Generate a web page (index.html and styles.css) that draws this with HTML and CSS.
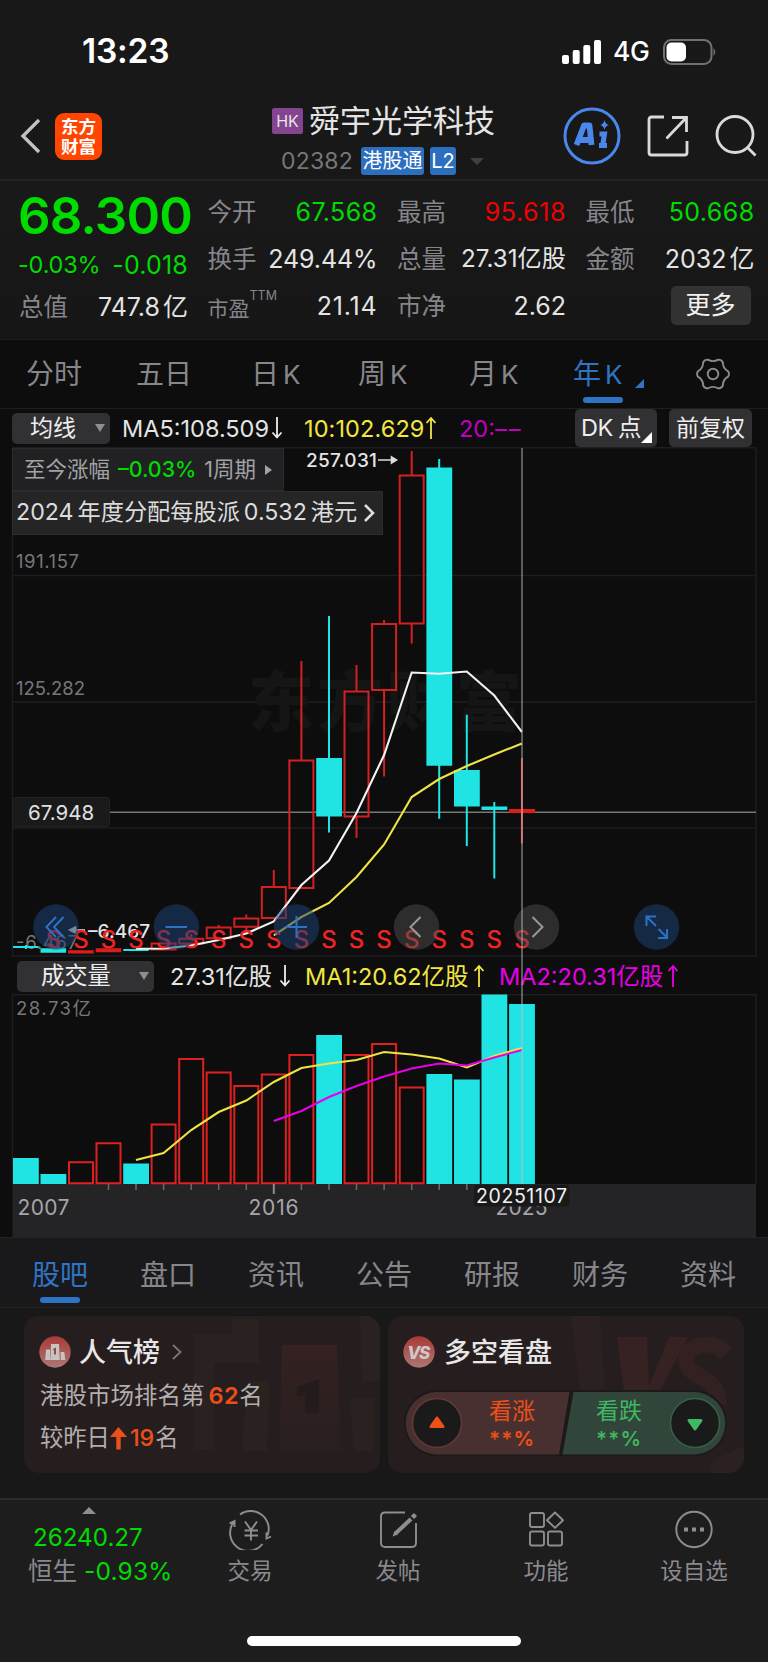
FILE: index.html
```html
<!DOCTYPE html>
<html lang="zh-CN">
<head>
<meta charset="utf-8">
<title>舜宇光学科技 02382</title>
<link rel="stylesheet" href="styles.css">
</head>
<body>
<div class="phone">
  <div class="status">
    <span class="clock">13:23</span>
    <svg class="signal" width="40" height="26" viewBox="0 0 40 26" fill="#fff"><rect x="0" y="16" width="7" height="9" rx="2"/><rect x="10.700" y="11" width="7" height="14" rx="2"/><rect x="21.300" y="6" width="7" height="19" rx="2"/><rect x="32" y="1" width="7" height="24" rx="2"/></svg>
    <span class="net">4G</span>
    <svg class="battery" width="54" height="28" viewBox="0 0 54 28"><rect x="1" y="2" width="47.500" height="24" rx="7.500" fill="none" stroke="#717171" stroke-width="2"/><rect x="3.500" y="4.500" width="19.500" height="19" rx="5" fill="#fff"/><path d="M50.500 10q3.500 4 0 8z" fill="#717171"/></svg>
  </div>

  <header class="header">
    <svg class="back" width="22" height="36" viewBox="0 0 22 36"><path d="M19 2L3 18l16 16" fill="none" stroke="#c2c2c2" stroke-width="3.400"/></svg>
    <div class="logo"><span>东方</span><span>财富</span></div>
    <div class="title">
      <div class="name-row"><span class="hk">HK</span><span class="name">舜宇光学科技</span></div>
      <div class="code-row"><span class="code">02382</span><span class="tag">港股通</span><span class="tag l2">L2</span><i class="drop"></i></div>
    </div>
    <svg class="ai" width="58" height="58" viewBox="0 0 58 58"><circle cx="29" cy="29" r="27" fill="none" stroke="#4a86ec" stroke-width="3"/><path d="M13.500 38L21 18.500h5.500L28.500 38M17 33h11" fill="none" stroke="#4a86ec" stroke-width="5.800" stroke-linejoin="round"/><path d="M36.500 27h5L39.500 39.500M36 38.500h8" fill="none" stroke="#4a86ec" stroke-width="5"/><path d="M41.500 13q.8 4.200 4.500 5-3.700.8-4.500 5-.8-4.200-4.500-5 3.700-.8 4.500-5z" fill="#4a86ec"/></svg>
    <svg class="share" width="42" height="42" viewBox="0 0 42 42" fill="none" stroke="#dadada" stroke-width="2.800"><path d="M17 2H4.500Q2 2 2 4.500v33Q2 40 4.500 40h33q2.500 0 2.500-2.500V26"/><path d="M25 2.500h14.500V17M39 3L19.500 23.500"/></svg>
    <svg class="search" width="42" height="42" viewBox="0 0 42 42" fill="none" stroke="#dadada" stroke-width="2.800"><circle cx="20" cy="19.500" r="18"/><path d="M32.500 32.500l8 8"/></svg>
  </header>

  <section class="quote">
    <div class="main">
      <div class="price">68.300</div>
      <div class="chg"><span>-0.03%</span><span class="chg2">-0.018</span></div>
      <div class="cell"><label>总值</label><b>747.8<em>亿</em></b></div>
    </div>
    <div class="col">
      <div class="cell"><label>今开</label><b class="up">67.568</b></div>
      <div class="cell"><label>换手</label><b class="w">249.44%</b></div>
      <div class="cell"><label class="pe">市盈<sup>TTM</sup></label><b class="n">21.14</b></div>
    </div>
    <div class="col">
      <div class="cell"><label>最高</label><b class="red">95.618</b></div>
      <div class="cell"><label>总量</label><b class="s">27.31亿股</b></div>
      <div class="cell"><label>市净</label><b>2.62</b></div>
    </div>
    <div class="col">
      <div class="cell"><label>最低</label><b class="up">50.668</b></div>
      <div class="cell"><label>金额</label><b>2032<em>亿</em></b></div>
      <div class="cell"><span class="more">更多</span></div>
    </div>
  </section>

  <nav class="periods">
    <span class="p1">分时</span><span class="p2">五日</span><span class="p3">日<u>K</u></span><span class="p3">周<u>K</u></span><span class="p3">月<u>K</u></span><span class="p3 on">年<u>K</u><i class="corner"></i></span>
    <span class="p4"><svg width="34" height="34" viewBox="-17 -17 34 34" fill="none" stroke="#8a8a8e" stroke-width="1.900"><circle r="5.300"/><path stroke-linejoin="round" d="M15.100-2.700Q16.800 0 15.100 2.700Q9.800 5.700 9.800 11.800Q8.400 14.500 5.200 14.400Q0 11.300-5.200 14.400Q-8.400 14.500-9.800 11.800Q-9.800 5.700-15.100 2.700Q-16.800 0-15.100-2.700Q-9.800-5.700-9.800-11.800Q-8.400-14.500-5.200-14.400Q0-11.300 5.200-14.400Q8.400-14.500 9.800-11.800Q9.800-5.700 15.100-2.700z"/></svg></span>
  </nav>

  <section class="chart">
    <div class="ma-row">
      <span class="btn sel">均线<i></i></span>
      <span class="ma ma5">MA5:108.509</span><svg class="arr" width="12" height="24" viewBox="0 0 12 24" stroke="#eee"><path d="M6 1v20M1.500 16.500L6 21.500l4.500-5"/></svg>
      <span class="ma ma10">10:102.629</span><svg class="arr" width="12" height="24" viewBox="0 0 12 24" stroke="#f2e640"><path d="M6 23V2M1.500 7L6 2l4.500 5"/></svg>
      <span class="ma ma20">20:<em>––</em></span>
      <span class="btn dk">DK<s></s>点<i></i></span>
      <span class="btn fq">前复权</span>
    </div>

    <div class="kline">
      <svg width="768" height="510" viewBox="0 447 768 510">
        <g fill="none" stroke="#1e1e20" stroke-width="1.500"><path d="M12.500 447.700H756V956H12.500zM12.500 575.500H756M12.500 702H756M12.500 828H756"/></g>
        <text class="mark" x="248" y="726" textLength="274">东方财富</text>
        <g class="axis"><text x="16" y="568" textLength="63">191.157</text><text x="16" y="695" textLength="69">125.282</text><text x="16" y="949" textLength="62">-6.467</text></g>
        <path d="M110 812.300H756" stroke="#777" stroke-width="1.500"/>
        <g fill="none" stroke="#d42020" stroke-width="2">
          <path d="M151.600 943.500h24v6h-24zM179.200 938.800h24v4.800h-24zM206.700 927.500h24v10.800h-24zM234.300 918.500h24v8.300h-24zM261.800 887h24v31h-24zM289.400 760.500h24V888h-24zM344.500 691.500h24v125h-24zM372.100 624h24v66h-24zM399.700 475.500h24v148h-24z"/>
          <path d="M191.200 934v4M191.200 944v3M218.700 925v2M246.300 914.500v4M246.300 927v7M273.800 870v17M301.400 661v99M356.500 665v26M356.500 817v21M384.100 620v4M384.100 690v86.500M411.700 451v24M411.700 624v19.500"/>
        </g>
        <path fill="#dd1c1c" d="M68.100 950.300h25.600v3.200H68.100zM95.700 948.200h25.600v4H95.700zM509.100 809h26v4h-26z"/>
        <path d="M521.900 758v85.500" stroke="#d8433f" stroke-width="2"/>
        <path fill="#20e4e4" d="M13 946h25.600v2H13zM24.900 945h2v4h-2zM40.500 948.300h25.600v4.400H40.500zM123.200 949h25.600v2h-25.600zM316.200 758h25.800v58.500h-25.800zM426.400 467.500h25.800v298.200h-25.800zM454 770h25.800v36.500H454zM481.500 806.500h25.800v3.500h-25.800z"/>
        <path d="M329 616v142M329 816v16.500M439.200 459v9M439.200 765v53.700M466.800 714.700v56M466.800 806v40M494.300 802v76.500" stroke="#20e4e4" stroke-width="2"/>
        <path class="line" stroke="#f3f3f3" d="M136 948.800L163.600 948.500L191.200 945.500L218.700 940L246.300 933.500L273.800 921.500L301.400 885L329 860.500L356.500 813L384.100 755L411.700 672.500L439.200 673.700L466.800 671.500L494.300 695.500L521.900 732"/>
        <path class="line" stroke="#efe445" d="M273.800 935.300L301.400 917L329 903L356.500 877L384.100 844.500L411.700 797L439.200 779L466.800 766L494.300 754.500L521.900 743.500"/>
        <g class="tip"><text x="306" y="467" textLength="71">257.031</text><text x="88" y="937.500" textLength="62">–6.467</text></g>
        <path d="M378 460h15M391.500 457l5 3-5 3zM72 930h13M75.500 927l-6 3 6 3z" stroke="#ddd" stroke-width="1.600" fill="#ddd"/>
      </svg>
      <div class="rise">至今涨幅 <b>–0.03%</b> <span>1周期</span><i></i></div>
      <div class="notice">2024<s></s>年度分配每股派<s></s>0.532<s></s>港元<svg width="12" height="20" viewBox="0 0 12 20"><path d="M2 2l8 8-8 8" fill="none" stroke="#ddd" stroke-width="2.600"/></svg></div>
      <div class="pricebox">67.948</div>
      <svg class="overlay" width="768" height="60" viewBox="0 897 768 60">
        <g class="sig"><text x="53.400" y="947.500">S</text><text x="80.900" y="947.500">S</text><text x="108.500" y="947.500">S</text><text x="136" y="947.500">S</text><text x="163.600" y="947.500">S</text><text x="191.200" y="947.500">S</text><text x="218.700" y="947.500">S</text><text x="246.300" y="947.500">S</text><text x="273.800" y="947.500">S</text><text x="301.400" y="947.500">S</text><text x="329" y="947.500">S</text><text x="356.500" y="947.500">S</text><text x="384.100" y="947.500">S</text><text x="411.700" y="947.500">S</text><text x="439.200" y="947.500">S</text><text x="466.800" y="947.500">S</text><text x="494.300" y="947.500">S</text><text x="521.900" y="947.500">S</text></g>
        <g fill="#1d4272" fill-opacity=".55"><circle cx="56" cy="927" r="22.700"/><circle cx="176.300" cy="927" r="22.700"/><circle cx="296.500" cy="927" r="22.700"/><circle cx="656.500" cy="927" r="22.700"/></g>
        <g fill="#4e4e50" fill-opacity=".5"><circle cx="416.500" cy="927" r="22.700"/><circle cx="536.500" cy="927" r="22.700"/></g>
        <g fill="none" stroke="#2c72c8" stroke-width="2"><path d="M56 917L46.500 927L56 937M63.500 917L54 927L63.500 937M165.500 927h21.500M285.500 927h21.500M296.500 916v22M656 926l-9.500-9.500M646.500 926v-9.500h9.500M658.500 929l8.500 8.500M658 938h9v-9"/></g>
        <g fill="none" stroke="#98989a" stroke-width="2"><path d="M420.500 917L410.500 927L420.500 937M532.500 917L542.500 927L532.500 937"/></g>
      </svg>
    </div>

    <div class="vol-row">
      <span class="btn sel2">成交量<i></i></span>
      <span class="ma v0">27.31亿股</span><svg class="arr" width="12" height="24" viewBox="0 0 12 24" stroke="#eee"><path d="M6 1v20M1.500 16.500L6 21.500l4.500-5"/></svg>
      <span class="ma v1">MA1:20.62亿股</span><svg class="arr" width="12" height="24" viewBox="0 0 12 24" stroke="#f2e640"><path d="M6 23V2M1.500 7L6 2l4.500 5"/></svg>
      <span class="ma v2">MA2:20.31亿股</span><svg class="arr" width="12" height="24" viewBox="0 0 12 24" stroke="#e800e8"><path d="M6 23V2M1.500 7L6 2l4.500 5"/></svg>
    </div>

    <svg class="volume" width="768" height="245" viewBox="0 994 768 245">
      <path d="M12.500 1184V994.700H756V1184" fill="none" stroke="#1e1e20" stroke-width="1.500"/>
      <path d="M12.500 1184H756v54H12.500z" fill="#242426"/>
      <text class="ax" x="16" y="1014.500" textLength="75">28.73亿</text>
      <path fill="#20e4e4" d="M13 1158h25.800v26H13zM40.500 1174h25.800v10H40.500zM123.200 1163.500h25.800v20.500h-25.800zM316.200 1035h25.800v149h-25.800zM426.400 1074h25.800v110h-25.800zM454 1079.500h25.800V1184H454zM481.500 994.500h25.800V1184h-25.800zM509.100 1004h25.800v180h-25.800z"/>
      <path fill="none" stroke="#df2020" stroke-width="2" d="M69 1162.300h24v21h-24zM96.500 1143.300h24v40h-24zM151.600 1124.500h24v58.800h-24zM179.200 1059h24v124.300h-24zM206.700 1072.500h24v110.800h-24zM234.300 1086h24v97.300h-24zM261.800 1074.500h24v108.800h-24zM289.400 1055h24v128.300h-24zM344.500 1055h24v128.300h-24zM372.100 1044h24v139.300h-24zM399.700 1087.500h24v95.800h-24z"/>
      <path d="M108.500 1184v6M136 1184v6M163.600 1184v6M191.200 1184v6M218.700 1184v6M246.300 1184v6M301.400 1184v6M329 1184v6M356.500 1184v6M384.100 1184v6M411.700 1184v6M439.200 1184v6M466.800 1184v6" stroke="#6c6c6e" stroke-width="1.500"/><path d="M273.800 1184v10" stroke="#8c8c8e" stroke-width="2"/>
      <path class="line" stroke="#efe445" d="M136 1160L163.600 1153L191.200 1130L218.700 1112L246.300 1100.500L273.800 1082L301.400 1068L329 1063.500L356.500 1060L384.100 1052L411.700 1054.500L439.200 1058.500L466.800 1067.500L494.300 1056L521.900 1048"/>
      <path class="line" stroke="#e600e6" d="M273.800 1121L301.400 1111L329 1097L356.500 1086L384.100 1076.500L411.700 1068.500L439.200 1063.500L466.800 1065.500L494.300 1057.500L521.900 1050"/>
      <g class="year"><text x="17.500" y="1215" textLength="52">2007</text><text x="248.500" y="1215" textLength="50">2016</text><text x="495.500" y="1215" textLength="52">2025</text></g>
      <rect x="474" y="1185" width="95.500" height="21.500" rx="3" fill="#19191a"/>
      <text class="date" x="476" y="1203.200" textLength="91">20251107</text>
    </svg>
    <div class="cross"></div>
  </section>

  <nav class="tabs"><span class="on">股吧</span><span>盘口</span><span>资讯</span><span>公告</span><span>研报</span><span>财务</span><span>资料</span></nav>

  <section class="cards">
    <div class="card">
      <svg class="deco" width="356" height="157" viewBox="0 0 356 157"><path d="M208 3h27v44h-45v86h-20V18h38zM223 65h23l-3 70h-25zM336 0h20v65h-18zM326 82h24v53h-20z" fill="#2a2121"/><path d="M258 29h55l4 106h-61z" fill="url(#g2)"/><path d="M273 71l22-8v34h-14V79l-8 1z" fill="#241c1c"/><defs><linearGradient id="g2" x2="0" y2="1"><stop stop-color="#352121"/><stop offset="1" stop-color="#281f1f"/></linearGradient></defs></svg>
      <div class="head"><svg width="32" height="32" viewBox="0 0 32 32"><defs><linearGradient id="g1" x2="0" y2="1"><stop stop-color="#a83a37"/><stop offset="1" stop-color="#ad7774"/></linearGradient></defs><circle cx="16" cy="16" r="15.700" fill="url(#g1)"/><path d="M7 13.500h4V24H6.200zM12 8h8l.8 16h-9.500zM21.500 16h3.800l1 8h-4.500z" fill="#c8c2c1"/><path d="M14 13l3-1.500v7h-2v-4.800l-1 .3z" fill="#8a4d4a"/></svg><span>人气榜</span><svg class="chev" width="12" height="18" viewBox="0 0 12 18"><path d="M2 2l7.500 7L2 16" fill="none" stroke="#777" stroke-width="1.800"/></svg></div>
      <p class="rank">港股市场排名第<b>62</b>名</p>
      <p class="delta">较昨日<svg width="17" height="23" viewBox="0 0 17 23"><path d="M8.500 0L17 10h-6.300v12.500H6.300V10H0z" fill="#ec5018"/></svg><b>19</b>名</p>
    </div>
    <div class="card right">
      <svg class="deco" width="356" height="157" viewBox="0 0 356 157"><path d="M183 0h29l5 75h-25zM323 145l33-15v20q-3 6-16 7h-17z" fill="#2b2121"/><path d="M229 21h30l2 49 20-49h19l-33 63h-30z" fill="#362222"/><path d="M338 38l-6-6q-8-5-18-3-15 3-16 15 0 10 15 17 17 8 18 28" fill="none" stroke="#332121" stroke-width="16"/></svg>
      <div class="head"><svg width="32" height="32" viewBox="0 0 32 32"><circle cx="16" cy="16" r="15.700" fill="url(#g1)"/><text x="15" y="22.500" class="vs">VS</text></svg><span>多空看盘</span></div>
      <div class="vote">
        <svg width="326" height="68" viewBox="0 0 326 68"><path d="M34 1H291a33 33 0 0 1 0 66H34a33 33 0 0 1 0-66z" fill="#1b191a"/><path d="M34 3H166.500L156 65.500H34A31.200 31.200 0 0 1 34 3z" fill="#493030"/><path d="M170.500 3H291a31.200 31.200 0 0 1 0 62.500H159.500z" fill="#31453a"/><circle cx="34" cy="34" r="24.500" fill="#1a1a1b" stroke="#663838" stroke-width="1.500"/><circle cx="292" cy="34" r="24.500" fill="#1a1a1b" stroke="#356347" stroke-width="1.500"/><path d="M34 29l6 8.500H28z" fill="#ec5018" stroke="#ec5018" stroke-width="3" stroke-linejoin="round"/><path d="M292 40l-6-8.500h12z" fill="#3fb763" stroke="#3fb763" stroke-width="3" stroke-linejoin="round"/></svg>
        <div class="bull">看涨<span>**%</span></div><div class="bear">看跌<span>**%</span></div>
      </div>
    </div>
  </section>

  <footer class="bottom">
    <div class="index"><i></i><b>26240.27</b><div>恒生<em>-0.93%</em></div></div>
    <div class="item"><svg width="44" height="40" viewBox="0 0 44 40"><path d="M12 4.500A18 18 0 0 1 39.500 25.500M43 26.500l-4.500 2V22.500M34.500 34A18 18 0 0 1 6 11.500M1.500 13.500L6.500 11v6M17 11.500l6 8.500 6-8.500M16.500 20.500h13.500M16.500 25.500h13.500M23 20v10.500"/></svg><span>交易</span></div>
    <div class="item"><svg width="44" height="40" viewBox="0 0 44 40"><path d="M29 2.500H9Q5 2.500 5 6.500v26Q5 37 9 37h27q4 0 4-4.500V13"/><path d="M35 9L20 23" stroke-width="4"/><path d="M36.500 7.500l3-3" stroke-width="4.500"/><path d="M18.500 21l-2 5.500 5.500-2z" fill="#8e8e92" stroke="none"/></svg><span>发帖</span></div>
    <div class="item"><svg width="44" height="40" viewBox="0 0 44 40"><rect x="6" y="3" width="14" height="14" rx="2"/><rect x="6" y="21.500" width="14" height="14" rx="2"/><rect x="24" y="21.500" width="14" height="14" rx="2"/><path d="M31 2.500l8 7.700-8 7.700-8-7.700z" stroke-linejoin="round"/></svg><span>功能</span></div>
    <div class="item"><svg width="44" height="40" viewBox="0 0 44 40"><circle cx="22" cy="19.500" r="17.700"/><path d="M12 19.500h4M20 19.500h4M28 19.500h4" stroke-width="4"/></svg><span>设自选</span></div>
  </footer>
  <div class="home"><i></i></div>
</div>
</body>
</html>
```
FILE: styles.css
```css
* { box-sizing: border-box; }
body { margin: 0; background: #181818; font-family: Inter, "Noto Sans CJK SC", sans-serif; font-weight: 400; line-height: 1; color: #e4e4e4; }
b, em, i, u, s { font-weight: inherit; font-style: normal; text-decoration: none; }
svg { display: block; flex: none; }
.phone { width: 768px; height: 1663px; overflow: hidden; background: #181818; display: flex; flex-direction: column; white-space: nowrap; border-bottom: 1px solid #fff; }
.phone > * { flex: none; }

.status { height: 95px; padding: 8px 50px 0 82px; display: flex; align-items: center; }
.clock { font-size: 33.500px; font-weight: 600; color: #fff; letter-spacing: -.2px; flex: 1; }
.net { font-size: 26.500px; font-weight: 500; color: #fff; margin: 0 15px 0 11px; width: 37px; letter-spacing: -.5px; }
.battery { margin-left: -2px; margin-right: 1px; }

.header { height: 86px; padding: 0 11px 2px 20px; display: flex; align-items: center; border-bottom: 2px solid #242426; }
.back { margin-right: 13px; }
.logo { width: 47px; height: 47px; border-radius: 9px; background: #ff4500; display: flex; flex-direction: column; align-items: center; justify-content: center; gap: 1px; color: #fff; font-size: 17.500px; font-weight: 700; line-height: 19px; }
.title { flex: 1; display: flex; flex-direction: column; align-self: stretch; padding: 6px 0 0 170px; }
.title > div { flex: none; }
.name-row { display: flex; align-items: center; height: 38px; }
.hk { width: 31px; height: 26px; background: #84448f; border-radius: 2px; font-size: 16px; display: grid; place-items: center; margin-right: 6px; margin-top: 1px; }
.name { font-size: 31px; }
.code-row { display: flex; align-items: center; height: 38px; padding-left: 9px; margin-top: 3px; }
.code { font-size: 23px; color: #77777b; width: 80px; letter-spacing: .2px; }
.tag { width: 63px; height: 28px; border-radius: 3px; background: #2d6fbf; color: #fff; font-size: 20px; display: grid; place-items: center; }
.l2 { width: 26px; margin-left: 6px; }
.drop { border: 7px solid transparent; border-top-color: #3f3f41; border-bottom: 0; margin-left: 14px; }
.ai { margin-right: 26px; }
.share { margin-right: 26px; }

.quote { height: 159px; padding: 8px 12px 0 19px; display: grid; grid-template-columns: 169px 170px 169px 169px; column-gap: 19.500px; background: linear-gradient(#19191a, #161616); border-bottom: 1px solid #1e1e1e; }
.price { color: #00dc00; font-size: 51px; font-weight: 600; height: 53px; line-height: 54px; letter-spacing: -.8px; margin-left: -1px; }
.chg { display: flex; justify-content: space-between; align-items: center; color: #00dc00; font-size: 23.500px; height: 42px; letter-spacing: -.2px; padding-top: 3px; margin-left: -1px; }
.chg2 { font-size: 25px; padding-top: 2px; letter-spacing: .2px; }
.main .cell { height: 46px; }
.cell { height: 47px; display: flex; justify-content: space-between; align-items: center; font-size: 25px; }
label { color: #85858a; font-size: 24.500px; }
.cell em { margin-left: 3px; }
.up { color: #00dc00; letter-spacing: .4px; } .red { color: #f00000; letter-spacing: .6px; }
.cell .s { font-size: 24.200px; }
.w { letter-spacing: -.1px; }
.n { letter-spacing: .8px; }
.pe { font-size: 21px; position: relative; top: 2px; }
.pe sup { font-size: 12.500px; vertical-align: top; position: relative; top: -8px; }
.more { margin-left: 85px; margin-right: 4px; flex: 1; height: 39px; background: #323233; border-radius: 5px; display: grid; place-items: center; color: #f2f2f2; font-size: 25px; margin-top: -3px; }

.periods { height: 68px; background: #0d0d0d; display: flex; align-items: center; font-size: 28px; color: #87878b; padding-left: 26px; }
.periods span { position: relative; flex: none; }
.p1 { width: 110px; }
.p2 { width: 115px; }
.p3 { width: 107px; }
.p3:nth-child(4) { width: 111px; }
.p3:nth-child(5) { width: 104px; }
.p3:nth-child(6) { width: 123px; }
u { margin-left: 4px; font-size: 26px; }
.on { color: #2f74c4; position: relative; }
.periods .on::after { content: ""; position: absolute; left: 10px; top: 37px; width: 40px; height: 6px; border-radius: 3px; background: #2f74c4; }
.corner { position: absolute; left: 62px; top: 19px; border-left: 9px solid transparent; border-bottom: 9px solid #2f74c4; }

.chart { position: relative; background: #0d0d0d; height: 830px; border-top: 1px solid #1e1e1e; border-bottom: 1px solid #222; }
.ma-row { height: 38px; display: flex; align-items: center; padding-left: 12px; }
.ma-row > *, .vol-row > * { flex: none; }
.btn { background: #313133; border-radius: 5px; color: #eee; display: flex; align-items: center; }
.sel { width: 98px; height: 31px; padding-left: 18px; font-size: 23px; margin-right: 12px; }
.btn i { border: 5px solid transparent; border-top: 8px solid #8e8e92; border-bottom: 0; margin-left: 19px; }
.ma { font-size: 23.500px; padding-top: 1px; }
.arr { fill: none; stroke-width: 1.800; }
.ma5 { width: 149px; }
.ma10 { width: 121px; margin-left: 21px; color: #f2e640; letter-spacing: .1px; }
.ma20 { color: #c000c0; width: 92px; margin-left: 22px; }
.ma20 em { letter-spacing: 2px; }
.dk { width: 82px; height: 38px; font-size: 23.500px; padding-left: 6px; margin-right: 12px; position: relative; letter-spacing: -.4px; }
.dk s { width: 5px; }
.ma-row .dk { margin-left: auto; }
.dk i { position: absolute; right: 5px; bottom: 4px; margin: 0; border: 0; border-left: 11px solid transparent; border-bottom: 11px solid #fff; }
.fq { width: 83px; height: 38px; font-size: 23px; padding-left: 7px; margin-right: 16px; }
.kline { position: relative; height: 510px; }
.mark { font-size: 66px; font-weight: 900; fill: #151516; }
.axis text, .ax { font-size: 18.500px; fill: #77777b; }
.line { fill: none; stroke-width: 2.100; }
.tip text { font-size: 19px; font-weight: 500; fill: #e4e4e4; }
.rise { position: absolute; left: 12px; top: 1px; width: 272px; height: 43px; background: #212123; border: 1px solid #2b2b2d; display: flex; align-items: center; padding-left: 11px; padding-top: 1px; font-size: 21.500px; color: #a2a2a5; }
.rise b { color: #00dc00; font-weight: 500; margin: 0 8px; font-size: 21.400px; }
.rise i { border: 5px solid transparent; border-left: 7px solid #a2a2a5; border-right: 0; margin-left: 9px; }
.notice { position: absolute; left: 12px; top: 44px; width: 371px; height: 44px; background: #252526; border: 1px solid #2c2c2e; display: flex; align-items: center; padding-left: 3px; font-size: 23.200px; color: #dcdcdc; }
.notice s { width: 4px; }
.notice svg { margin-left: 6px; }
.pricebox { position: absolute; left: 12px; top: 350px; width: 98px; height: 30px; border-radius: 3px; background: #1a1a1b; border: 1px solid #222224; font-size: 20.500px; color: #e0e0e0; display: grid; place-items: center; padding-top: 2px; }
.overlay { position: absolute; left: 0; top: 450px; }
.sig { font-size: 24px; font-weight: 500; fill: #f02424; text-anchor: middle; }
.vol-row { height: 37px; display: flex; align-items: center; padding: 1px 0 0 17px; }
.sel2 { width: 137px; height: 31px; padding-left: 24px; font-size: 23.300px; margin-right: 16px; }
.sel2 i { margin-left: 28px; }
.v0 { width: 109px; }
.v1 { color: #f2e640; width: 168px; margin-left: 14px; }
.v2 { color: #e800e8; width: 168px; margin-left: 14px; }
.year text { font-size: 21px; fill: #a6a6a9; }
.date { font-size: 19.500px; fill: #f2f2f2; }
.cross { position: absolute; left: 521px; top: 39px; width: 2px; height: 736px; background: rgba(190,190,190,.45); }

.tabs { height: 70px; background: #19191b; border-bottom: 1px solid #222220; display: flex; align-items: center; padding: 5px 0 0 32px; font-size: 28px; color: #87878b; }
.tabs span { width: 108px; flex: none; }
.tabs .on { color: #2f74c4; }
.tabs .on::after { content: ""; position: absolute; left: 8px; top: 36px; width: 40px; height: 6px; border-radius: 3px; background: #2f74c4; }

.cards { height: 190px; padding: 8px 24px 0; display: flex; gap: 8px; }
.card { position: relative; width: 356px; height: 157px; border-radius: 15px; background: #261e1e; overflow: hidden; padding: 19px 16px 0 15px; color: #b3aeae; }
.deco { position: absolute; left: 0; top: 0; }
.head { position: relative; height: 33px; display: flex; align-items: center; font-size: 27px; font-weight: 500; color: #e8e6e6; gap: 8px; }
.head span { padding-top: 1px; }
.chev { margin-left: 3px; }
.card p { position: relative; margin: 0; display: flex; align-items: center; }
.card .rank { height: 55px; margin-left: 1px; font-size: 23.500px; }
.rank b { font-weight: 600; color: #ec5018; letter-spacing: .5px; margin: 0 0 0 4px; }
.card .delta { height: 30px; margin-left: 1px; font-size: 23.300px; }
.delta b { color: #ec5018; font-weight: 500; margin: 0 1px 0 3px; }
.delta svg { margin-left: 0; }
.right .head { gap: 9px; }
.vs { font-size: 17px; font-weight: 800; font-style: italic; fill: #cfc6c5; text-anchor: middle; letter-spacing: -1.500px; }
.vote { position: relative; margin: 21px 0 0; height: 68px; }
.bull, .bear { position: absolute; left: 86px; top: 11px; display: flex; flex-direction: column; gap: 6px; font-size: 23px; color: #ec5018; }
.bear { left: 193px; color: #3fb763; }
.bull span, .bear span { font-size: 20.500px; letter-spacing: 1.200px; font-weight: 600; }

.bottom { height: 128px; background: #1d1d1d; border-top: 2px solid #2c2c2e; display: flex; color: #8a8a8e; font-size: 22.500px; }
.index { width: 176px; padding: 7px 0 0 28px; display: flex; flex-direction: column; }
.index i { width: 14px; border: 7px solid transparent; border-bottom-color: #8e8e92; border-top: 0; margin-left: 54px; }
.index b { color: #00dc00; font-size: 24.200px; margin: 12px 0 0 5px; }
.index div { margin-top: 9px; font-size: 24.500px; }
.index em { color: #00dc00; margin-left: 7px; letter-spacing: .2px; }
.item { width: 148px; display: flex; flex-direction: column; align-items: center; padding-top: 10px; }
.item svg { fill: none; stroke: #8e8e92; stroke-width: 1.900; }
.item span { margin-top: 10px; }
.phone .home { flex: 1; background: #1d1d1d; display: flex; justify-content: center; padding-top: 10px; }
.home i { width: 274px; height: 10px; border-radius: 5px; background: #fff; }
```
